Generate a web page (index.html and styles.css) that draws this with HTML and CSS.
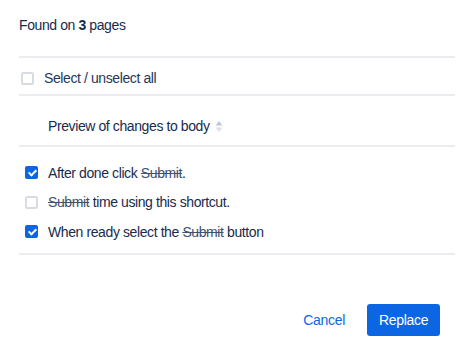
FILE: index.html
```html
<!DOCTYPE html>
<html lang="en">
<head>
    <meta charset="UTF-8">
    <meta name="viewport" content="width=device-width, initial-scale=1.0">
    <title>Find and replace</title>
    <link rel="stylesheet" href="styles.css">
</head>
<body>
    <div class="dialog">
        <div class="summary">Found on <b>3</b> pages</div>

        <div class="select-all">
            <span class="check"></span>
            <span>Select / unselect all</span>
        </div>

        <div class="preview-head">
            <span>Preview of changes to body</span>
            <svg class="sort" width="8" height="13" viewBox="0 0 8 13">
                <path d="M4 1 L7.5 5.5 H0.5 Z" fill="#c1c7d0"/>
                <path d="M4 12 L7.5 7.5 H0.5 Z" fill="#dfe1e6"/>
            </svg>
        </div>

        <!-- 変更リスト -->
        <div class="changes">
            <div class="change">
                <span class="check checked"></span>
                <span>After done click <s>Submit</s>.</span>
            </div>
            <div class="change">
                <span class="check"></span>
                <span><s>Submit</s> time using this shortcut.</span>
            </div>
            <div class="change">
                <span class="check checked"></span>
                <span>When ready select the <s>Submit</s> button</span>
            </div>
        </div>

        <div class="footer">
            <button class="btn btn-link">Cancel</button>
            <button class="btn btn-primary">Replace</button>
        </div>
    </div>
</body>
</html>
```

FILE: styles.css
```css
* {
    margin: 0;
    padding: 0;
    box-sizing: border-box;
}

body {
    font-family: 'Liberation Sans', Arial, sans-serif;
    font-size: 14px;
    letter-spacing: -0.4px;
    color: #172b4d;
    background: #fff;
}

.dialog {
    padding: 0 15px 0 19px;
}

.summary {
    height: 56px;
    padding-top: 17px;
    color: #172b4d;
}

.summary b {
    font-weight: 700;
}

.select-all {
    border-top: 2px solid #ebecf0;
    border-bottom: 2px solid #ebecf0;
    height: 40px;
    display: flex;
    align-items: center;
    gap: 10px;
    padding-left: 2px;
    padding-top: 4px;
    color: #253858;
}

.check {
    width: 13px;
    height: 13px;
    border: 2px solid #d8dce2;
    border-radius: 2px;
    flex-shrink: 0;
    position: relative;
}

.check.checked {
    background: #0c66e4;
    border-color: #0c66e4;
}

.check.checked::after {
    content: '';
    position: absolute;
    left: 3px;
    top: 0px;
    width: 3px;
    height: 6px;
    border-right: 2px solid #fff;
    border-bottom: 2px solid #fff;
    transform: rotate(45deg);
}

.preview-head {
    height: 51px;
    border-bottom: 2px solid #ebecf0;
    display: flex;
    align-items: center;
    gap: 5px;
    padding-left: 29px;
    padding-top: 11px;
    color: #172b4d;
}

.changes {
    padding: 11px 0 6px 6px;
    border-bottom: 2px solid #ebecf0;
}

.change {
    height: 29.5px;
    display: flex;
    align-items: center;
    gap: 10px;
    color: #172b4d;
}

.change s {
    color: #42526e;
}

.footer {
    display: flex;
    justify-content: flex-end;
    align-items: center;
    gap: 10px;
    padding-top: 49px;
    padding-right: 15px;
}

.btn {
    font-family: inherit;
    font-size: 14px;
    letter-spacing: -0.3px;
    border: none;
    border-radius: 3px;
    height: 32px;
    padding: 0 12px;
    cursor: pointer;
}

.btn-link {
    background: none;
    color: #0c66e4;
}

.btn-primary {
    background: #0c66e4;
    color: #fff;
    width: 73px;
}
```
